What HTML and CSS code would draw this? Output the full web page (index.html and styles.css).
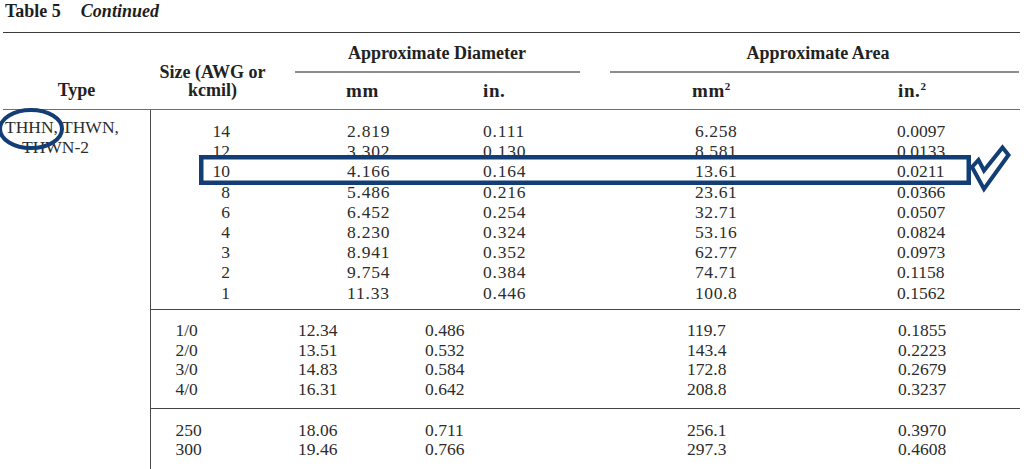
FILE: index.html
```html
<!DOCTYPE html>
<html lang="en">
<head>
<meta charset="utf-8">
<title>Table 5 Continued</title>
<link rel="stylesheet" href="styles.css">
</head>
<body>
<div class="sheet">
  <div class="caption"><b>Table 5</b><b class="cont">Continued</b></div>
  <table class="data">
    <colgroup>
      <col class="c-type"><col class="c-size"><col class="c-mm"><col class="c-in"><col class="c-mm2"><col class="c-in2">
    </colgroup>
    <thead>
      <tr class="hA">
        <th rowspan="2" class="h-type">Type</th>
        <th rowspan="2" class="h-size">Size (AWG or<br>kcmil)</th>
        <th colspan="2" class="h-group"><div class="gtitle t-diam">Approximate Diameter</div><div class="rule rule-diam"></div></th>
        <th colspan="2" class="h-group"><div class="gtitle t-area">Approximate Area</div><div class="rule rule-area"></div></th>
      </tr>
      <tr class="hB">
        <th class="h-mm">mm</th>
        <th class="h-in">in.</th>
        <th class="h-mm2">mm<sup>2</sup></th>
        <th class="h-in2">in.<sup>2</sup></th>
      </tr>
    </thead>
    <tbody>
      <tr class="g1">
        <td rowspan="3" class="type"><div class="tline">THHN, THWN,</div><div class="tline t2">THWN-2</div></td>
        <td class="size">14<br>12<br>10<br>8<br>6<br>4<br>3<br>2<br>1</td>
        <td class="mm">2.819<br>3.302<br>4.166<br>5.486<br>6.452<br>8.230<br>8.941<br>9.754<br>11.33</td>
        <td class="in">0.111<br>0.130<br>0.164<br>0.216<br>0.254<br>0.324<br>0.352<br>0.384<br>0.446</td>
        <td class="mm2">6.258<br>8.581<br>13.61<br>23.61<br>32.71<br>53.16<br>62.77<br>74.71<br>100.8</td>
        <td class="in2">0.0097<br>0.0133<br>0.0211<br>0.0366<br>0.0507<br>0.0824<br>0.0973<br>0.1158<br>0.1562</td>
      </tr>
      <tr class="g2">
        <td class="size">1/0<br>2/0<br>3/0<br>4/0</td>
        <td class="mm">12.34<br>13.51<br>14.83<br>16.31</td>
        <td class="in">0.486<br>0.532<br>0.584<br>0.642</td>
        <td class="mm2">119.7<br>143.4<br>172.8<br>208.8</td>
        <td class="in2">0.1855<br>0.2223<br>0.2679<br>0.3237</td>
      </tr>
      <tr class="g3">
        <td class="size">250<br>300</td>
        <td class="mm">18.06<br>19.46</td>
        <td class="in">0.711<br>0.766</td>
        <td class="mm2">256.1<br>297.3</td>
        <td class="in2">0.3970<br>0.4608</td>
      </tr>
    </tbody>
  </table>
  <svg class="marks" width="1024" height="469" viewBox="0 0 1024 469" aria-hidden="true">
    <ellipse cx="31" cy="129" rx="31" ry="19" fill="none" stroke="#123d75" stroke-width="4"/>
    <rect x="201.25" y="157.25" width="767.5" height="25.5" fill="none" stroke="#123d75" stroke-width="4.5"/>
    <polygon points="972,167 978.5,160 984,170.5 1002.5,147.5 1008.5,155 984,189" fill="none" stroke="#123d75" stroke-width="4" stroke-linejoin="miter"/>
  </svg>
</div>
</body>
</html>
```
FILE: styles.css
```css
html, body {
  margin: 0;
  padding: 0;
  background: #ffffff;
}

body {
  font-family: "Liberation Serif", "Times New Roman", serif;
  color: #2c2c2c;
  width: 1024px;
  height: 469px;
  overflow: hidden;
}

.sheet {
  position: relative;
  width: 1024px;
  height: 469px;
}

.caption {
  height: 31px;
  padding-top: 1px;
  padding-left: 5px;
  font-size: 18px;
  line-height: 20px;
  color: #1e1e1e;
}

.caption .cont {
  font-style: italic;
  margin-left: 20px;
}

.data {
  margin-left: 3px;
  width: 1017px;
  border-collapse: collapse;
  table-layout: fixed;
  border-top: 1.5px solid #3a3a3a;
}

.c-type { width: 147px; }
.c-size { width: 145px; }
.c-mm   { width: 125px; }
.c-in   { width: 175px; }
.c-mm2  { width: 215px; }
.c-in2  { width: 210px; }

.data th {
  font-weight: bold;
  font-size: 18px;
  line-height: 20px;
  padding: 0;
  text-align: left;
  vertical-align: top;
  color: #222;
}

.data th sup {
  font-size: 11px;
  line-height: 0;
  vertical-align: 7px;
}

.h-type,
.h-size {
  vertical-align: bottom !important;
  text-align: center !important;
  line-height: 18px !important;
  padding-bottom: 10px !important;
  border-bottom: 1.5px solid #6e6e6e;
}

.h-size {
  padding-right: 20px !important;
}

.h-group {
  padding-top: 9.5px !important;
}

.gtitle {
  line-height: 20px;
  text-align: center;
}

.t-diam { padding-right: 16px; }
.t-area { padding-left: 21px; }

.rule {
  height: 2px;
  background: #8c8c8c;
  margin-top: 8px;
}

.rule-diam { margin-right: 15px; }
.rule-area { margin-left: 15px; margin-right: 1px; }

.hB th {
  font-size: 19px;
  letter-spacing: 0.6px;
  padding-top: 8.5px;
  padding-bottom: 8px;
  border-bottom: 1.5px solid #6e6e6e;
}

.h-mm  { padding-left: 51px !important; }
.h-in  { padding-left: 63px !important; }
.h-mm2 { padding-left: 97px !important; }
.h-in2 { padding-left: 88px !important; }

.data td {
  font-size: 17.5px;
  line-height: 20.2px;
  vertical-align: top;
  padding: 0;
  white-space: nowrap;
}

.type {
  padding: 7px 0 0 2px !important;
  border-right: 1.5px solid #4a4a4a;
  line-height: 20px !important;
}

.tline.t2 {
  padding-left: 17px;
}

.g1 td {
  padding-top: 11px;
  padding-bottom: 6.5px;
}

.g1 td.size { text-align: right; padding-right: 65px; }
.g1 td.mm   { padding-left: 52px; letter-spacing: 0.8px; }
.g1 td.in   { padding-left: 63px; letter-spacing: 0.8px; }
.g1 td.mm2  { padding-left: 100px; letter-spacing: 0.6px; }
.g1 td.in2  { padding-left: 87px; }

.g2 td,
.g3 td {
  line-height: 19.8px;
  border-top: 1.5px solid #444;
}

.g2 td {
  padding-top: 10.5px;
  padding-bottom: 8px;
}

.g3 td {
  padding-top: 11.5px;
  padding-bottom: 20px;
}

.g2 td.size, .g3 td.size { padding-left: 25px; }
.g2 td.mm,   .g3 td.mm   { padding-left: 3px; }
.g2 td.in,   .g3 td.in   { padding-left: 5px; }
.g2 td.mm2,  .g3 td.mm2  { padding-left: 92px; }
.g2 td.in2,  .g3 td.in2  { padding-left: 88px; }

.marks {
  position: absolute;
  left: 0;
  top: 0;
  pointer-events: none;
}
```
